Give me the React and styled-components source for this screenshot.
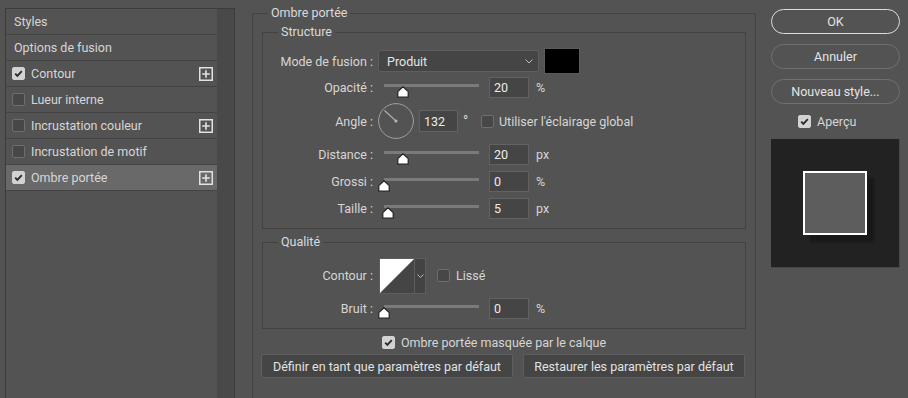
import React from "react";
import styled, { createGlobalStyle } from "styled-components";

const GlobalStyle = createGlobalStyle`
  html, body { margin: 0; padding: 0; background: #535353; overflow: hidden; }
  body {
    font-family: Roboto, "Noto Sans", "Liberation Sans", sans-serif;
    font-size: 12.5px;
    color: #d6d6d6;
  }
  * { box-sizing: border-box; }
`;

const Dialog = styled.div`
  display: flex;
  align-items: flex-start;
  width: 908px;
  height: 398px;
  overflow: hidden;
`;

/* ---------- left list ---------- */
const LeftPanel = styled.div`
  flex-shrink: 0;
  display: flex;
  margin: 8px 0 0 5px;
  width: 230px;
  height: 420px;
  border: 1px solid #3c3c3c;
`;
const List = styled.ul`
  list-style: none;
  margin: 0;
  padding: 0;
  width: 211px;
`;
const ScrollTrack = styled.div`
  flex: 1;
  background: #494949;
`;
const Item = styled.li`
  display: flex;
  align-items: center;
  gap: 6px;
  height: 26px;
  padding-left: ${(p) => (p.$check ? "6px" : "8px")};
  border-bottom: 1px solid #434343;
  background: ${(p) => (p.$active ? "#696969" : "transparent")};
  white-space: nowrap;
`;
const PlusBox = styled.svg`
  margin-left: auto;
  margin-right: 4px;
  flex-shrink: 0;
`;

/* ---------- checkbox ---------- */
const Box = styled.span`
  flex-shrink: 0;
  display: inline-flex;
  align-items: center;
  justify-content: center;
  width: 13px;
  height: 13px;
  border-radius: 2px;
  background: ${(p) => (p.$checked ? "#d2d2d2" : "#474747")};
  border: 1px solid ${(p) => (p.$checked ? "#d2d2d2" : "#6e6e6e")};
`;
const Checkbox = ({ checked }) => (
  <Box $checked={checked}>
    {checked && (
      <svg width="11" height="11" viewBox="0 0 11 11">
        <path d="M2.2 5.6 L4.4 7.8 L8.8 3.2" fill="none" stroke="#2b2b2b" strokeWidth="1.9" />
      </svg>
    )}
  </Box>
);

const Plus = () => (
  <PlusBox width="14" height="14" viewBox="0 0 14 14">
    <rect x="0.75" y="0.75" width="12.5" height="12.5" fill="none" stroke="#e2e2e2" strokeWidth="1.5" />
    <path d="M7 3.2 V10.8 M3.2 7 H10.8" stroke="#e2e2e2" strokeWidth="1.6" />
  </PlusBox>
);

/* ---------- main groups ---------- */
const MainGroup = styled.fieldset`
  flex-shrink: 0;
  margin: 5px 0 0 17px;
  width: 504px;
  height: 430px;
  padding: 0 9px;
  border: 1px solid #424242;
  min-width: 0;
`;
const Legend = styled.legend`
  margin-left: ${(p) => p.$offset}px;
  padding: 0 3px;
  line-height: 16px;
  color: #dadada;
`;
const SubGroup = styled.fieldset`
  margin: ${(p) => p.$mt}px 0 0 0;
  padding: ${(p) => p.$pt}px 0 6px 0;
  border: 1px solid #424242;
  min-width: 0;
`;
const Row = styled.div`
  display: flex;
  align-items: center;
  height: ${(p) => p.$h}px;
  white-space: nowrap;
`;
const Label = styled.span`
  flex-shrink: 0;
  width: 110px;
  margin-right: 5px;
  text-align: right;
`;
const Select = styled.div`
  display: flex;
  align-items: center;
  justify-content: space-between;
  width: 161px;
  height: 22px;
  padding: 0 5px 0 8px;
  background: #454545;
  border: 1px solid #5e5e5e;
  border-radius: 2px;
  color: #e4e4e4;
`;
const Swatch = styled.div`
  width: 36px;
  height: 26px;
  margin-left: 5px;
  background: #000;
  border: 1px solid #5a5a5a;
`;
const SliderWrap = styled.div`
  position: relative;
  flex-shrink: 0;
  width: 106px;
  height: 21px;
  margin-right: 5px;
`;
const Track = styled.div`
  margin: 7px 0 0 6px;
  width: 95px;
  height: 3px;
  background: #7a7a7a;
`;
const Thumb = styled.svg`
  position: absolute;
  top: 9px;
`;
const NumInput = styled.input`
  flex-shrink: 0;
  width: ${(p) => p.$w || 40}px;
  height: ${(p) => p.$hh || 21}px;
  padding: 0 0 0 4px;
  margin: 0;
  background: #454545;
  border: 1px solid #626262;
  color: #ececec;
  font: inherit;
  outline: none;
`;
const Unit = styled.span`
  margin-left: 7px;
`;
const Degree = styled.span`
  width: 18px;
  margin-left: 5px;
  font-size: 14px;
`;
const CheckLabel = styled.label`
  display: inline-flex;
  align-items: center;
  gap: ${(p) => p.$gap || 5}px;
  margin-left: ${(p) => p.$ml || 0}px;
`;
const Dial = styled.svg`
  flex-shrink: 0;
  margin-right: 5px;
`;
const ContourPicker = styled.div`
  display: flex;
  margin-left: 1px;
  height: 36px;
  border: 1px solid #5e5e5e;
`;
const ContourDrop = styled.div`
  display: flex;
  align-items: center;
  justify-content: center;
  width: 11px;
  background: #434343;
  border-left: 1px solid #5e5e5e;
`;
const MaskRow = styled.div`
  display: flex;
  align-items: center;
  height: 20px;
  margin: 3px 0 0 120px;
`;
const ButtonRow = styled.div`
  display: flex;
  gap: 10px;
  margin: 2px 0 0 -1px;
`;
const FlatButton = styled.button`
  width: ${(p) => p.$w}px;
  height: 24px;
  padding: 0;
  background: #454545;
  border: 1px solid #5f5f5f;
  border-radius: 2px;
  color: #e2e2e2;
  font: inherit;
`;

/* ---------- right column ---------- */
const RightCol = styled.div`
  flex-shrink: 0;
  display: flex;
  flex-direction: column;
  margin: 9px 0 0 15px;
  width: 129px;
`;
const PillStack = styled.div`
  display: flex;
  flex-direction: column;
  gap: 10px;
`;
const Pill = styled.button`
  height: 25px;
  padding: 0;
  border-radius: 13px;
  background: transparent;
  border: ${(p) => (p.$primary ? "1.5px solid #dcdcdc" : "1px solid #707070")};
  color: #e4e4e4;
  font: inherit;
`;
const PreviewToggle = styled.div`
  display: flex;
  align-items: center;
  height: 14px;
  margin-top: 10px;
  padding-left: 27px;
`;
const Preview = styled.div`
  display: flex;
  align-items: center;
  justify-content: center;
  margin-top: 11px;
  width: 129px;
  height: 129px;
  background: #222;
  border-right: 1px solid #484848;
  border-bottom: 1px solid #484848;
`;
const PreviewSquare = styled.div`
  width: 64px;
  height: 64px;
  background: #5d5d5d;
  border: 2px solid #fff;
  box-shadow: 7px 7px 2px #181818;
`;

const Slider = ({ value }) => (
  <SliderWrap>
    <Track />
    <Thumb width="12" height="12" viewBox="0 0 12 12" style={{ left: 6 + value * 95 - 6 }}>
      <path d="M6 0.8 L11.2 5.6 V11.2 H0.8 V5.6 Z" fill="#fff" stroke="#222" strokeWidth="1.2" strokeLinejoin="round" />
    </Thumb>
  </SliderWrap>
);

const SliderRow = ({ label, value, frac, unit }) => (
  <Row $h={27}>
    <Label>{label}</Label>
    <Slider value={frac} />
    <NumInput readOnly value={value} />
    <Unit>{unit}</Unit>
  </Row>
);

const items = [
  { name: "Styles" },
  { name: "Options de fusion" },
  { name: "Contour", check: true, checked: true, plus: true },
  { name: "Lueur interne", check: true },
  { name: "Incrustation couleur", check: true, plus: true },
  { name: "Incrustation de motif", check: true },
  { name: "Ombre portée", check: true, checked: true, plus: true, active: true },
];

export default function App() {
  return (
    <>
      <GlobalStyle />
      <Dialog>
        <LeftPanel>
          <List>
            {items.map((it) => (
              <Item key={it.name} $check={it.check} $active={it.active}>
                {it.check && <Checkbox checked={it.checked} />}
                <span>{it.name}</span>
                {it.plus && <Plus />}
              </Item>
            ))}
          </List>
          <ScrollTrack />
        </LeftPanel>

        <MainGroup>
          <Legend $offset={6}>Ombre portée</Legend>
          <SubGroup $mt={3} $pt={8}>
            <Legend $offset={15}>Structure</Legend>
            <Row $h={26}>
              <Label>Mode de fusion :</Label>
              <Select>
                <span>Produit</span>
                <svg width="8" height="5" viewBox="0 0 8 5">
                  <path d="M0.5 0.5 L4 4 L7.5 0.5" fill="none" stroke="#bdbdbd" strokeWidth="1" />
                </svg>
              </Select>
              <Swatch />
            </Row>
            <SliderRow label="Opacité :" value="20" frac={0.2} unit="%" />
            <Row $h={40}>
              <Label>Angle :</Label>
              <Dial width="36" height="36" viewBox="0 0 36 36">
                <circle cx="18" cy="18" r="17.4" fill="none" stroke="#a0a0a0" strokeWidth="1" />
                <path d="M18 18 L6.5 7.5" stroke="#b0b0b0" strokeWidth="1.1" />
                <circle cx="18" cy="18" r="1.6" fill="#b5b5b5" />
              </Dial>
              <NumInput readOnly value="132" $w={39} $hh={22} />
              <Degree>°</Degree>
              <CheckLabel>
                <Checkbox />
                <span>Utiliser l'éclairage global</span>
              </CheckLabel>
            </Row>
            <SliderRow label="Distance :" value="20" frac={0.2} unit="px" />
            <SliderRow label="Grossi :" value="0" frac={0} unit="%" />
            <SliderRow label="Taille :" value="5" frac={0.045} unit="px" />
          </SubGroup>

          <SubGroup $mt={5} $pt={6}>
            <Legend $offset={15}>Qualité</Legend>
            <Row $h={39}>
              <Label>Contour :</Label>
              <ContourPicker>
                <svg width="34" height="34" viewBox="0 0 34 34">
                  <rect width="34" height="34" fill="#454545" />
                  <polygon points="0,0 34,0 0,34" fill="#fff" />
                </svg>
                <ContourDrop>
                  <svg width="7" height="4" viewBox="0 0 7 4">
                    <path d="M0.5 0.5 L3.5 3.5 L6.5 0.5" fill="none" stroke="#bdbdbd" strokeWidth="1" />
                  </svg>
                </ContourDrop>
              </ContourPicker>
              <CheckLabel $ml={11} $gap={6}>
                <Checkbox />
                <span>Lissé</span>
              </CheckLabel>
            </Row>
            <SliderRow label="Bruit :" value="0" frac={0} unit="%" />
          </SubGroup>

          <MaskRow>
            <CheckLabel $gap={6}>
              <Checkbox checked />
              <span>Ombre portée masquée par le calque</span>
            </CheckLabel>
          </MaskRow>
          <ButtonRow>
            <FlatButton $w={252}>Définir en tant que paramètres par défaut</FlatButton>
            <FlatButton $w={222}>Restaurer les paramètres par défaut</FlatButton>
          </ButtonRow>
        </MainGroup>

        <RightCol>
          <PillStack>
            <Pill $primary>OK</Pill>
            <Pill>Annuler</Pill>
            <Pill>Nouveau style...</Pill>
          </PillStack>
          <PreviewToggle>
            <CheckLabel $gap={6}>
              <Checkbox checked />
              <span>Aperçu</span>
            </CheckLabel>
          </PreviewToggle>
          <Preview>
            <PreviewSquare />
          </Preview>
        </RightCol>
      </Dialog>
    </>
  );
}
